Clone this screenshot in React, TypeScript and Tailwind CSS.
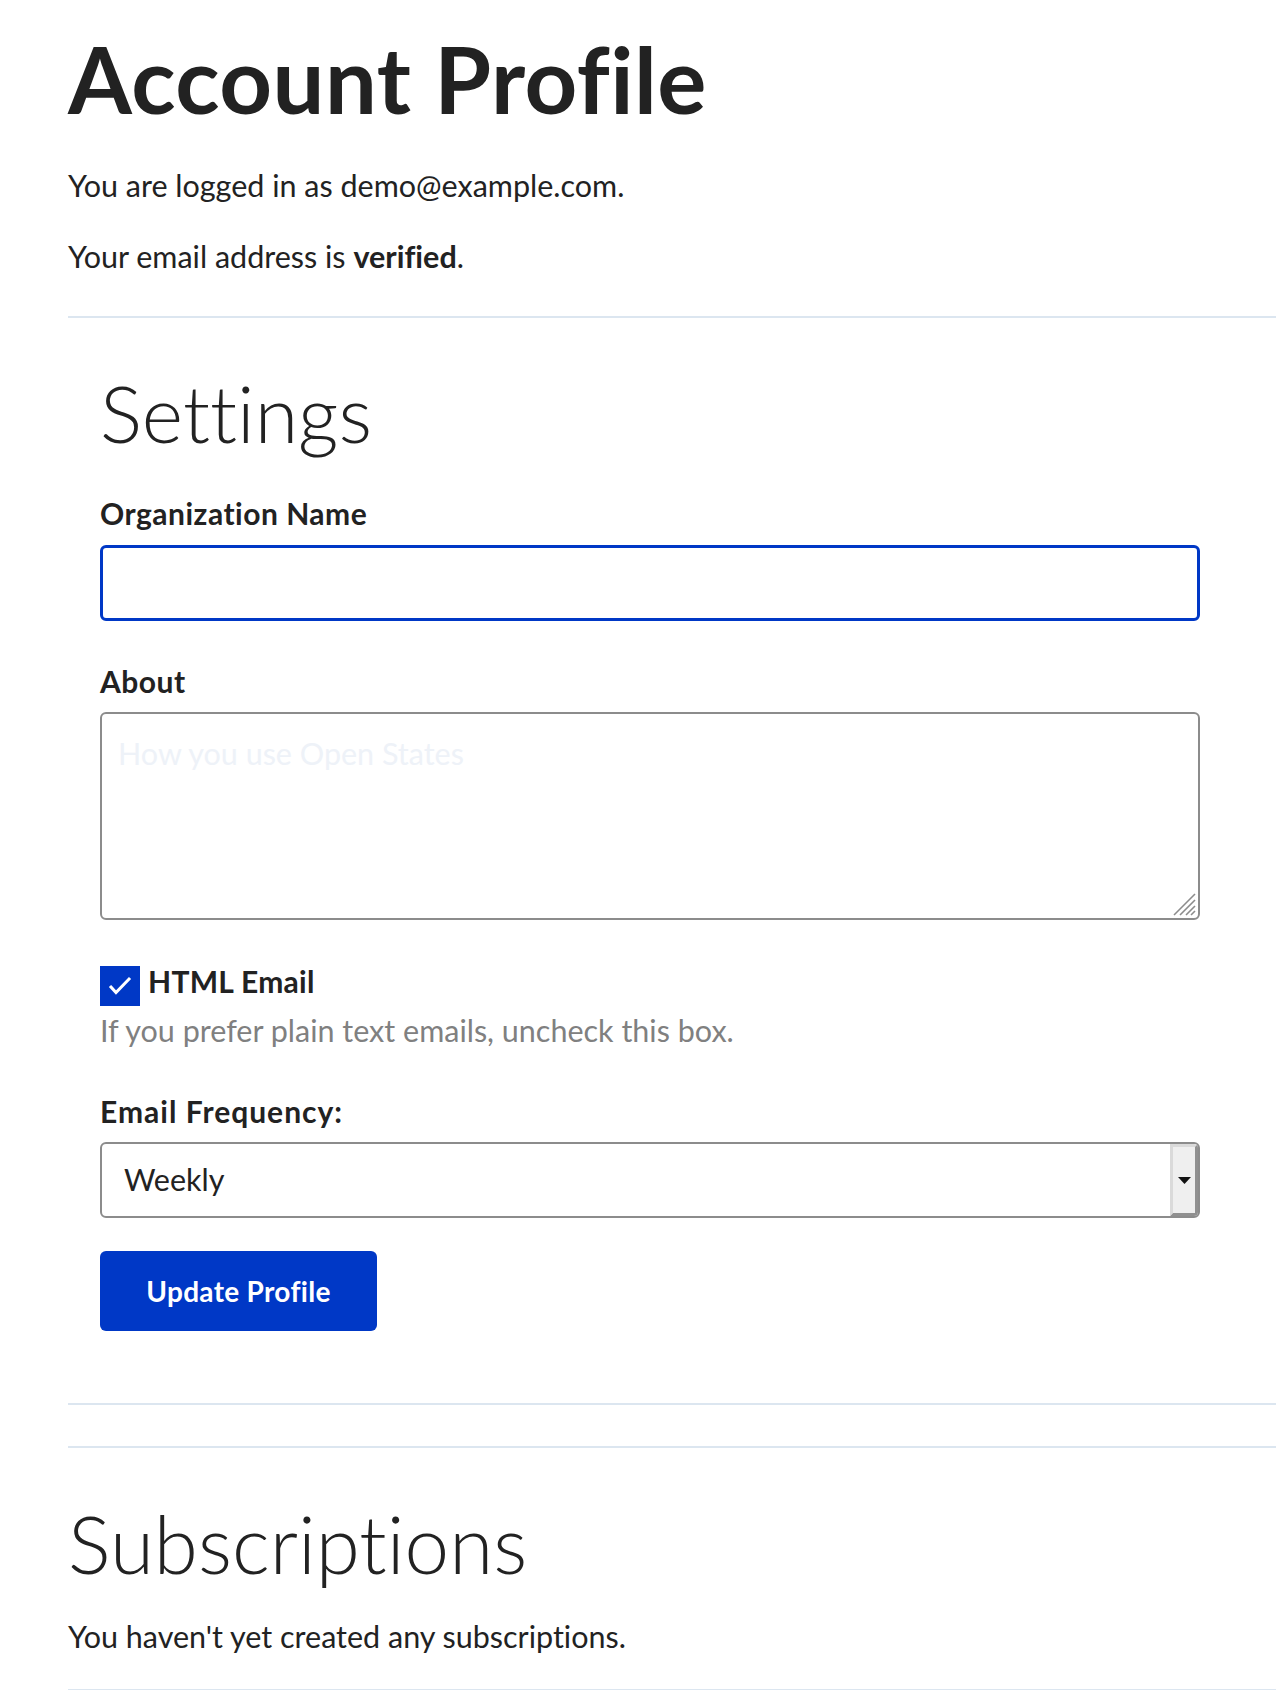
import { useState } from 'react';

const FONT = { fontFamily: 'Lato, "Noto Sans", sans-serif' };

export default function App() {
  const [orgName, setOrgName] = useState('');
  const [about, setAbout] = useState('');
  const [htmlEmail, setHtmlEmail] = useState(true);
  const [frequency, setFrequency] = useState('weekly');

  return (
    <div
      className="min-h-screen bg-white pl-[68px] pt-[33px] text-[#222222] [font-variant-ligatures:none]"
      style={FONT}
    >
      <h1 className="text-[92px] font-bold leading-none tracking-[0.5px]">Account Profile</h1>
      <p className="mt-[40px] text-[30.5px] leading-[40px]">You are logged in as demo@example.com.</p>
      <p className="mt-[31px] text-[30.5px] leading-[40px]">
        Your email address is <strong className="font-bold">verified</strong>.
      </p>

      <hr className="mt-[40px] border-0 border-t-2 border-[#dce6f0]" />

      {/* Settings */}
      <section className="mr-[76px] pl-[32px] pb-[72px]">
        <h2 className="mt-[55px] text-[79px] font-light leading-none">Settings</h2>

        <form className="flex flex-col" onSubmit={(e) => e.preventDefault()}>
          <label htmlFor="org" className="mt-[45px] text-[30px] font-bold leading-[32px] tracking-[0.5px]">
            Organization Name
          </label>
          <input
            id="org"
            autoFocus
            value={orgName}
            onChange={(e) => setOrgName(e.target.value)}
            className="mt-[16px] h-[76px] w-full rounded-[6px] border-[3px] border-[#0038c6] px-[18px] text-[30.5px] caret-[#222222] outline-none"
          />

          <label htmlFor="about" className="mt-[44px] text-[30px] font-bold leading-[32px] tracking-[0.5px]">
            About
          </label>
          <div className="relative mt-[15px]">
            <textarea
              id="about"
              value={about}
              onChange={(e) => setAbout(e.target.value)}
              placeholder="How you use Open States"
              className="block h-[208px] w-full resize-none rounded-[6px] border-2 border-[#8c8c8c] px-[16px] pt-[19px] text-[30.5px] leading-[40px] outline-none placeholder:text-[#eef2f8]"
            />
            {/* resize grip */}
            <svg
              className="pointer-events-none absolute right-[4px] bottom-[4px]"
              width="24"
              height="24"
              viewBox="0 0 24 24"
            >
              <g stroke="#8c8c8c" strokeWidth="1.6">
                <line x1="2" y1="23" x2="23" y2="2" />
                <line x1="8" y1="23" x2="23" y2="8" />
                <line x1="14" y1="23" x2="23" y2="14" />
                <line x1="19" y1="23" x2="23" y2="19" />
              </g>
            </svg>
          </div>

          <label className="mt-[46px] flex cursor-pointer items-start gap-[8px]">
            <input
              type="checkbox"
              className="sr-only"
              checked={htmlEmail}
              onChange={(e) => setHtmlEmail(e.target.checked)}
            />
            <span
              className={`flex h-[40px] w-[40px] shrink-0 items-center justify-center ${
                htmlEmail ? 'bg-[#0038c6]' : 'border-2 border-[#8c8c8c] bg-white'
              }`}
            >
              {htmlEmail && (
                <svg width="40" height="40" viewBox="0 0 40 40" fill="none">
                  <path d="M11 21 L16 26.5 L29 13" stroke="white" strokeWidth="3" strokeLinecap="square" />
                </svg>
              )}
            </span>
            <span className="text-[30px] font-bold leading-[30px] tracking-[0.3px]">HTML Email</span>
          </label>
          <p className="mt-[4px] text-[30.5px] leading-[40px] text-[#808080]">
            If you prefer plain text emails, uncheck this box.
          </p>

          <label htmlFor="freq" className="mt-[45px] text-[30px] font-bold leading-[32px] tracking-[1px]">
            Email Frequency:
          </label>
          <div className="relative mt-[15px]">
            <select
              id="freq"
              value={frequency}
              onChange={(e) => setFrequency(e.target.value)}
              className="h-[76px] w-full appearance-none rounded-[6px] border-2 border-[#8c8c8c] bg-white px-[22px] text-[30.5px] outline-none"
            >
              <option value="daily">Daily</option>
              <option value="weekly">Weekly</option>
            </select>
            {/* old-style dropdown button */}
            <div className="pointer-events-none absolute top-[2px] right-[2px] bottom-[2px] flex w-[28px] items-center justify-center rounded-r-[4px] border-[3px] border-t-[#dadada] border-r-[#909090] border-b-[#909090] border-l-[#dadada] bg-[#efefef]">
              <svg width="13" height="7" viewBox="0 0 13 7">
                <path d="M0 0 H13 L6.5 7 Z" fill="#111" />
              </svg>
            </div>
          </div>

          <button
            type="submit"
            className="mt-[33px] h-[80px] w-[277px] rounded-[6px] bg-[#0038c6] text-[28px] font-bold tracking-[0.3px] text-white"
          >
            Update Profile
          </button>
        </form>
      </section>

      <hr className="border-0 border-t-2 border-[#dce6f0]" />
      <hr className="mt-[41px] border-0 border-t-2 border-[#dce6f0]" />

      {/* Subscriptions */}
      <h2 className="mt-[55px] text-[80px] font-light leading-none">Subscriptions</h2>
      <p className="mt-[33px] text-[30.5px] leading-[40px]">You haven't yet created any subscriptions.</p>
      <hr className="mt-[33px] border-0 border-t-2 border-[#dce6f0]" />
    </div>
  );
}
